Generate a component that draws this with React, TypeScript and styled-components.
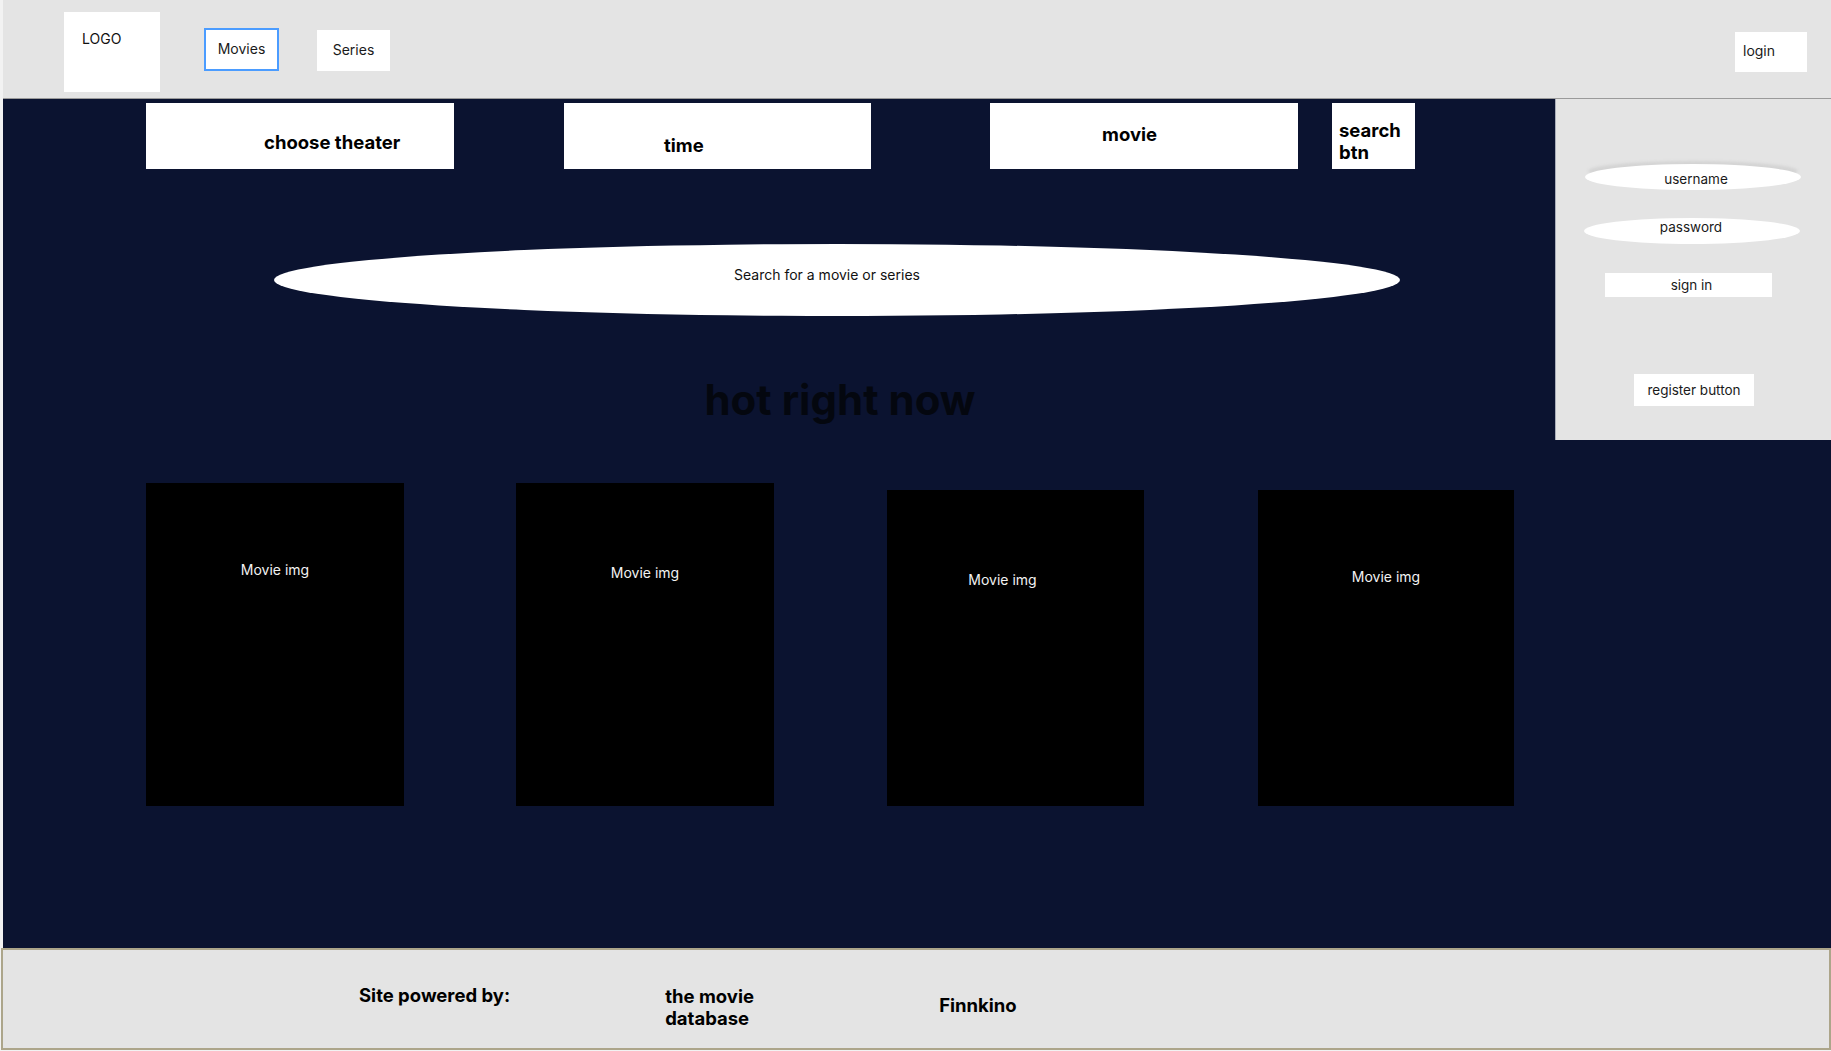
import React from 'react';
import styled, { createGlobalStyle } from 'styled-components';

const GlobalStyle = createGlobalStyle`
  html, body {
    margin: 0;
    padding: 0;
    background: #f2f2f2;
  }
  body {
    font-family: Inter, 'Noto Sans', 'Liberation Sans', sans-serif;
    color: #111;
  }
`;

const Frame = styled.div`
  width: 1828px;
  margin-left: 3px;
  display: flex;
  flex-direction: column;
`;

const Header = styled.header`
  height: 98px;
  background: #e4e4e4;
  border-bottom: 1px solid #9a9a9a;
  display: flex;
  align-items: flex-start;
`;

const Logo = styled.div`
  width: 96px;
  height: 80px;
  margin: 12px 0 0 61px;
  padding: 18px 0 0 18px;
  box-sizing: border-box;
  background: #fff;
  font-size: 14px;
  line-height: 17px;
`;

const NavButton = styled.button<{ $active?: boolean; $w: number; $h: number; $top: number; $ml: number }>`
  width: ${(p) => p.$w}px;
  height: ${(p) => p.$h}px;
  margin: ${(p) => p.$top}px 0 0 ${(p) => p.$ml}px;
  background: #fff;
  border: ${(p) => (p.$active ? '2px solid #4b9cff' : 'none')};
  box-sizing: border-box;
  font-family: inherit;
  font-size: 14px;
  color: #1a1a1a;
  padding: 0 0 2px;
  cursor: pointer;
`;

const LoginButton = styled.button`
  width: 72px;
  height: 40px;
  margin: 32px 24px 0 auto;
  padding: 0 0 4px 8px;
  text-align: left;
  background: #fff;
  border: none;
  font-family: inherit;
  font-size: 14px;
  color: #1a1a1a;
`;

const Body = styled.div`
  height: 849px;
  background: #0b1330;
  display: flex;
`;

const Main = styled.main`
  flex: 1;
  display: flex;
  flex-direction: column;
`;

const FilterRow = styled.div`
  display: flex;
  margin: 4px 0 0 143px;
`;

const FilterBox = styled.div<{ $w: number; $ml: number; $pad: string }>`
  width: ${(p) => p.$w}px;
  height: 66px;
  margin-left: ${(p) => p.$ml}px;
  padding: ${(p) => p.$pad};
  box-sizing: border-box;
  background: #fff;
  display: flex;
  align-items: center;
  font-size: 18.5px;
  font-weight: 700;
  line-height: 22px;
  color: #000;
`;

const SearchColumn = styled.div`
  width: 1126px;
  margin-left: 271px;
  display: flex;
  flex-direction: column;
`;

const SearchPill = styled.div`
  height: 72px;
  margin-top: 75px;
  border-radius: 50%;
  background: #fff;
  display: flex;
  align-items: center;
  justify-content: center;
  padding: 0 20px 12px 0;
  box-sizing: border-box;
  font-size: 14px;
  color: #111;
`;

const Title = styled.h2`
  margin: 59px 0 0 6px;
  text-align: center;
  font-size: 42px;
  line-height: 50px;
  font-weight: 700;
  color: #04070f;
`;

const CardRow = styled.div`
  display: flex;
  align-items: flex-start;
  margin: 58px 0 0 143px;
`;

const MovieCard = styled.div<{ $h: number; $w: number; $ml: number; $top: number; $pt: number; $dx: number }>`
  width: ${(p) => p.$w}px;
  height: ${(p) => p.$h}px;
  margin: ${(p) => p.$top}px 0 0 ${(p) => p.$ml}px;
  padding-top: ${(p) => p.$pt}px;
  box-sizing: border-box;
  background: #000;
  color: #f2f2f2;
  font-size: 14px;
  line-height: 17px;
  text-align: center;
  text-indent: ${(p) => p.$dx}px;
`;

const Aside = styled.aside`
  width: 276px;
`;

const LoginPanel = styled.div`
  height: 341px;
  background: #e4e4e4;
  border-left: 1px solid #a9adb8;
  box-sizing: border-box;
  display: flex;
  flex-direction: column;
  align-items: flex-start;
`;

const FieldPill = styled.div<{ $top: number; $ml: number; $dx: number; $dy: number; $shadow?: boolean }>`
  width: 216px;
  height: 26px;
  margin: ${(p) => p.$top}px 0 0 ${(p) => p.$ml}px;
  border-radius: 50%;
  background: #fff;
  box-shadow: ${(p) => (p.$shadow ? '0 -6px 3px -3px #d4d4d4' : 'none')};
  display: flex;
  align-items: center;
  justify-content: center;
  font-size: 13.5px;
  color: #1a1a1a;
  & > span {
    transform: translate(${(p) => p.$dx}px, ${(p) => p.$dy}px);
  }
`;

const PanelButton = styled.button<{ $w: number; $h: number; $top: number; $ml: number; $pl?: number }>`
  width: ${(p) => p.$w}px;
  height: ${(p) => p.$h}px;
  margin: ${(p) => p.$top}px 0 0 ${(p) => p.$ml}px;
  padding: 0 0 0 ${(p) => p.$pl ?? 0}px;
  background: #fff;
  border: none;
  font-family: inherit;
  font-size: 13.5px;
  color: #1a1a1a;
`;

const Footer = styled.footer`
  height: 102px;
  margin-left: -2px;
  background: #e4e4e4;
  border: 2px solid #aca58a;
  box-sizing: border-box;
  display: flex;
  align-items: flex-start;
  font-size: 18.5px;
  font-weight: 700;
  line-height: 22px;
  color: #000;
`;

const Credit = styled.div<{ $ml: number; $top: number; $w?: number }>`
  margin: ${(p) => p.$top}px 0 0 ${(p) => p.$ml}px;
  width: ${(p) => (p.$w ? `${p.$w}px` : 'auto')};
`;

const movies = [
  { w: 258, h: 323, ml: 0, top: 0, pt: 78, dx: 0 },
  { w: 258, h: 323, ml: 112, top: 0, pt: 81, dx: 0 },
  { w: 257, h: 316, ml: 113, top: 7, pt: 81, dx: -26 },
  { w: 256, h: 316, ml: 114, top: 7, pt: 78, dx: 0 },
];

export default function App() {
  return (
    <>
      <GlobalStyle />
      <Frame>
        <Header>
          <Logo>LOGO</Logo>
          <NavButton $active $w={75} $h={43} $top={28} $ml={44}>
            Movies
          </NavButton>
          <NavButton $w={73} $h={41} $top={30} $ml={38}>
            Series
          </NavButton>
          <LoginButton>login</LoginButton>
        </Header>
        <Body>
          <Main>
            <FilterRow>
              <FilterBox $w={308} $ml={0} $pad="12px 0 0 118px">
                choose theater
              </FilterBox>
              <FilterBox $w={307} $ml={110} $pad="18px 0 0 100px">
                time
              </FilterBox>
              <FilterBox $w={308} $ml={119} $pad="0 0 4px 112px">
                movie
              </FilterBox>
              <FilterBox $w={83} $ml={34} $pad="10px 0 0 7px">
                search
                <br />
                btn
              </FilterBox>
            </FilterRow>
            <SearchColumn>
              <SearchPill>Search for a movie or series</SearchPill>
              <Title>hot right now</Title>
            </SearchColumn>
            <CardRow>
              {movies.map((m, i) => (
                <MovieCard key={i} $w={m.w} $h={m.h} $ml={m.ml} $top={m.top} $pt={m.pt} $dx={m.dx}>
                  Movie img
                </MovieCard>
              ))}
            </CardRow>
          </Main>
          <Aside>
            <LoginPanel>
              <FieldPill $shadow $top={65} $ml={29} $dx={3} $dy={2}>
                <span>username</span>
              </FieldPill>
              <FieldPill $top={28} $ml={28} $dx={-1} $dy={-4}>
                <span>password</span>
              </FieldPill>
              <PanelButton $w={167} $h={24} $top={29} $ml={49} $pl={6}>
                sign in
              </PanelButton>
              <PanelButton $w={120} $h={32} $top={77} $ml={78}>
                register button
              </PanelButton>
            </LoginPanel>
          </Aside>
        </Body>
        <Footer>
          <Credit $ml={356} $top={34}>Site powered by:</Credit>
          <Credit $ml={155} $top={35} $w={98}>
            the movie database
          </Credit>
          <Credit $ml={176} $top={44}>Finnkino</Credit>
        </Footer>
      </Frame>
    </>
  );
}
